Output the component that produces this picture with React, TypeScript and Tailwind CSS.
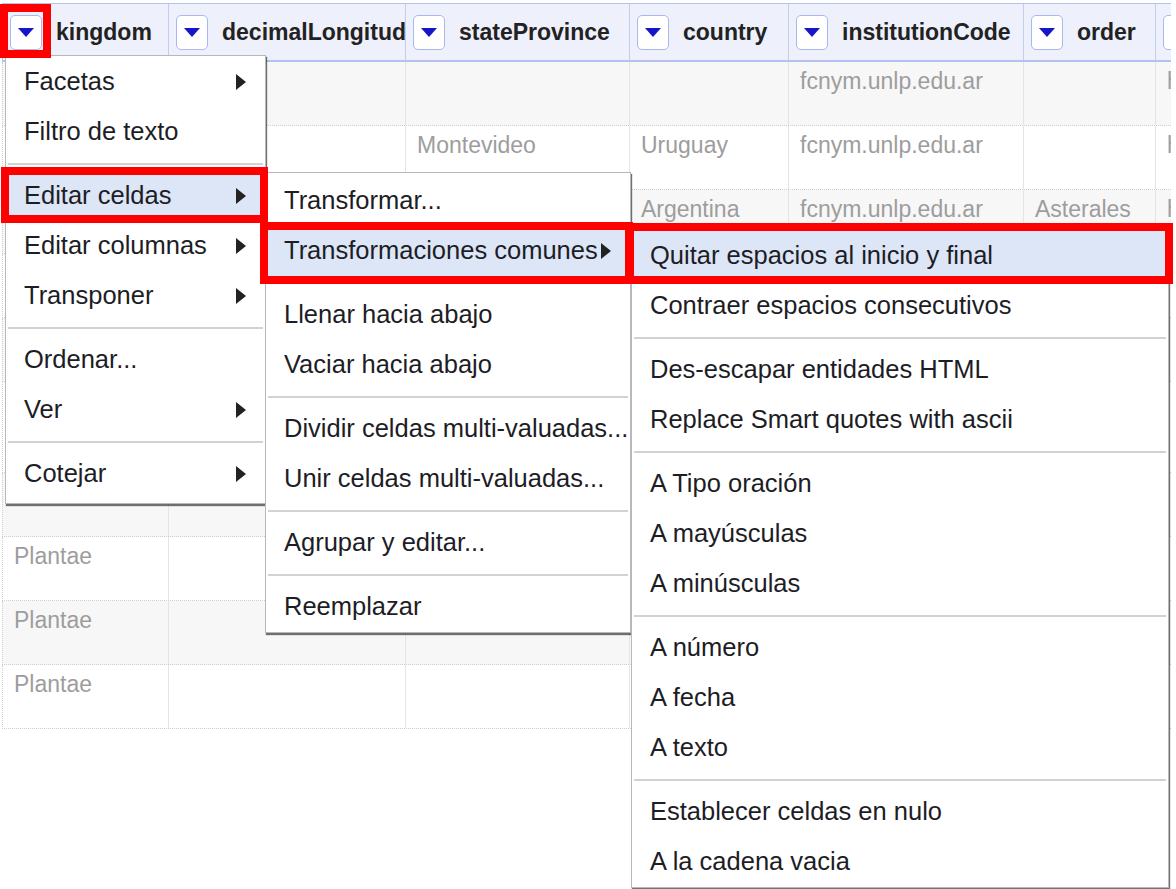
import React from "react";

type Item = { label: string; arrow?: boolean; active?: boolean } | "sep";

const mainMenu: Item[] = [
  { label: "Facetas", arrow: true },
  { label: "Filtro de texto" },
  "sep",
  { label: "Editar celdas", arrow: true, active: true },
  { label: "Editar columnas", arrow: true },
  { label: "Transponer", arrow: true },
  "sep",
  { label: "Ordenar..." },
  { label: "Ver", arrow: true },
  "sep",
  { label: "Cotejar", arrow: true },
];

const editMenu: Item[] = [
  { label: "Transformar..." },
  { label: "Transformaciones comunes", arrow: true, active: true },
  "sep",
  { label: "Llenar hacia abajo" },
  { label: "Vaciar hacia abajo" },
  "sep",
  { label: "Dividir celdas multi-valuadas..." },
  { label: "Unir celdas multi-valuadas..." },
  "sep",
  { label: "Agrupar y editar..." },
  "sep",
  { label: "Reemplazar" },
];

const commonMenu: Item[] = [
  { label: "Quitar espacios al inicio y final", active: true },
  { label: "Contraer espacios consecutivos" },
  "sep",
  { label: "Des-escapar entidades HTML" },
  { label: "Replace Smart quotes with ascii" },
  "sep",
  { label: "A Tipo oración" },
  { label: "A mayúsculas" },
  { label: "A minúsculas" },
  "sep",
  { label: "A número" },
  { label: "A fecha" },
  { label: "A texto" },
  "sep",
  { label: "Establecer celdas en nulo" },
  { label: "A la cadena vacia" },
];

const headers = [
  "kingdom",
  "decimalLongitude",
  "stateProvince",
  "country",
  "institutionCode",
  "order",
  "genus",
];

// one entry per row, 7 columns
const rows: string[][] = [
  ["", "", "", "", "fcnym.unlp.edu.ar", "", "h"],
  ["", "", "Montevideo", "Uruguay", "fcnym.unlp.edu.ar", "", "h"],
  ["", "", "", "Argentina", "fcnym.unlp.edu.ar", "Asterales", "h"],
  ["", "", "", "", "", "", ""],
  ["", "", "", "", "", "", ""],
  ["", "", "", "", "", "", ""],
  ["", "", "", "", "", "", ""],
  ["Plantae", "", "", "", "", "", ""],
  ["Plantae", "", "", "", "", "", ""],
  ["Plantae", "", "", "", "", "", ""],
];

const rowHeights = ["h-[64px]", "h-[64px]", "h-[64px]", "h-[64px]", "h-[64px]", "h-[91px]", "h-[64px]", "h-[64px]", "h-[64px]", "h-[64px]"];

const Arrow = () => (
  <svg width="10" height="16" viewBox="0 0 10 16" className="shrink-0">
    <path d="M0 0 L10 8 L0 16 Z" fill="#222" />
  </svg>
);

const DropButton = () => (
  <div className="flex h-[35px] w-[32px] shrink-0 items-center justify-center rounded-[5px] border-[1.5px] border-[#a9b8ee] bg-white">
    <svg width="16" height="9" viewBox="0 0 16 9">
      <path d="M0 0 L16 0 L8 9 Z" fill="#1616c8" />
    </svg>
  </div>
);

function Menu({ items, className }: { items: Item[]; className: string }) {
  return (
    <div
      className={
        "absolute border border-[#b8b8b8] bg-white shadow-[1px_2px_1px_rgba(0,0,0,0.55)] " +
        className
      }
    >
      {items.map((it, i) =>
        it === "sep" ? (
          <div key={i} className="flex h-[14px] items-center px-[2px]">
            <div className="h-[2px] w-full bg-[#d2d2d2]" />
          </div>
        ) : (
          <div
            key={i}
            className={
              "flex h-[50px] items-center justify-between whitespace-nowrap pl-[18px] pr-[19px] text-[25.5px] leading-none text-[#1d1d26] " +
              (it.active ? "bg-[#dce6f6]" : "")
            }
          >
            <span>{it.label}</span>
            {it.arrow && <Arrow />}
          </div>
        )
      )}
    </div>
  );
}

export default function App() {
  return (
    <div className="relative h-[889px] w-[1176px] overflow-hidden bg-white font-['Liberation_Sans',Arial,sans-serif]">
      <div className="ml-[2px] w-[1169px] overflow-hidden pt-[3px]">
        <div className="grid h-[59px] grid-cols-[166px_237px_224px_159px_235px_132px_40px] border-t border-b-2 border-l border-[#b4c2ef] bg-[#eef0fb]">
          {headers.map((h) => (
            <div
              key={h}
              className="flex items-center gap-[14px] overflow-hidden whitespace-nowrap border-r border-[#c3cdf2] pl-[7px] text-[23px] font-bold text-[#222]"
            >
              <DropButton />
              <span>{h}</span>
            </div>
          ))}
        </div>
        {rows.map((r, ri) => (
          <div
            key={ri}
            className={
              "grid grid-cols-[166px_237px_224px_159px_235px_132px_40px] border-b border-l border-dotted border-[#cfcfcf] " +
              rowHeights[ri] +
              (ri % 2 === 0 ? " bg-[#f7f7f7]" : " bg-white")
            }
          >
            {r.map((c, ci) => (
              <div
                key={ci}
                className="overflow-hidden whitespace-nowrap border-r border-solid border-[#e4e4e4] px-[11px] pt-[6px] text-[23px] leading-[26px] text-[#9d9d9d]"
              >
                {c}
              </div>
            ))}
          </div>
        ))}
      </div>

      <Menu items={mainMenu} className="left-[5px] top-[55px] w-[261px] pb-[4px] pt-[1px]" />
      <Menu items={editMenu} className="left-[265px] top-[172px] w-[366px] pt-[3px]" />
      <Menu items={commonMenu} className="left-[631px] top-[227px] w-[538px] pt-[3px]" />

      {/* red highlight frames */}
      <div className="absolute left-0 top-[4px] h-[54px] w-[51px] border-[8px] border-[#ff0000]" />
      <div className="absolute left-[1px] top-[167px] h-[56px] w-[267px] border-[8px] border-[#ff0000]" />
      <div className="absolute left-[260px] top-[222px] h-[62px] w-[373px] border-[8px] border-[#ff0000]" />
      <div className="absolute left-[626px] top-[223px] h-[61px] w-[547px] border-[8px] border-[#ff0000]" />
    </div>
  );
}
